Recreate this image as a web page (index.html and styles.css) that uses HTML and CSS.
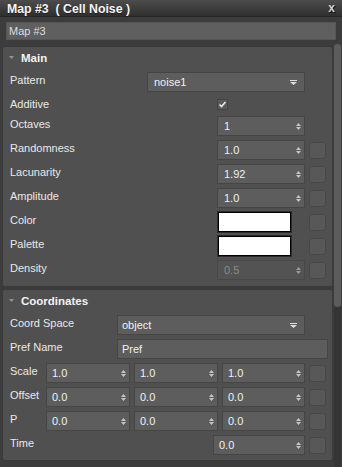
FILE: index.html
```html
<!DOCTYPE html>
<html>
<head>
<meta charset="utf-8">
<link rel="stylesheet" href="styles.css">
</head>
<body>
<div class="window">
  <div class="titlebar">
    <span class="title">Map #3  ( Cell Noise )</span>
    <span class="close">x</span>
  </div>
  <div class="namebar"><div class="namefield">Map #3</div></div>
  <div class="main">
    <div class="content">
      <section class="panel panel-main">
        <div class="panel-head">
          <svg class="tri" width="5" height="3" viewBox="0 0 5 3"><path d="M0 0H5L2.5 3Z"/></svg>
          <span class="panel-title">Main</span>
          <span class="grip"></span>
        </div>
        <div class="row"><span class="label w137">Pattern</span>
          <div class="field drop w158"><span>noise1</span>
            <svg class="darr" width="7" height="5" viewBox="0 0 7 5"><rect width="7" height="1"/><path d="M0 2H7L3.5 5Z"/></svg></div>
        </div>
        <div class="row row-short"><span class="label w207">Additive</span>
          <span class="check"><svg width="9" height="9" viewBox="0 0 9 9"><path d="M1.5 4.5L3.5 6.5L7.5 2" fill="none" stroke="#e8e8e8" stroke-width="1.6"/></svg></span>
        </div>
        <div class="row"><span class="label w207">Octaves</span>
          <div class="field w88"><span>1</span><svg class="spin" width="5" height="9" viewBox="0 0 5 9"><path d="M0 4H5L2.5 1ZM0 5H5L2.5 8Z"/></svg></div>
        </div>
        <div class="row"><span class="label w207">Randomness</span>
          <div class="field w88"><span>1.0</span><svg class="spin" width="5" height="9" viewBox="0 0 5 9"><path d="M0 4H5L2.5 1ZM0 5H5L2.5 8Z"/></svg></div>
          <span class="sq"></span>
        </div>
        <div class="row"><span class="label w207">Lacunarity</span>
          <div class="field w88"><span>1.92</span><svg class="spin" width="5" height="9" viewBox="0 0 5 9"><path d="M0 4H5L2.5 1ZM0 5H5L2.5 8Z"/></svg></div>
          <span class="sq"></span>
        </div>
        <div class="row"><span class="label w207">Amplitude</span>
          <div class="field w88"><span>1.0</span><svg class="spin" width="5" height="9" viewBox="0 0 5 9"><path d="M0 4H5L2.5 1ZM0 5H5L2.5 8Z"/></svg></div>
          <span class="sq"></span>
        </div>
        <div class="row"><span class="label w208">Color</span>
          <span class="swatch"></span>
          <span class="sq sq-sw"></span>
        </div>
        <div class="row"><span class="label w208">Palette</span>
          <span class="swatch"></span>
          <span class="sq sq-sw"></span>
        </div>
        <div class="row"><span class="label w207">Density</span>
          <div class="field w88 disabled"><span>0.5</span><svg class="spin" width="5" height="9" viewBox="0 0 5 9"><path d="M0 4H5L2.5 1ZM0 5H5L2.5 8Z"/></svg></div>
          <span class="sq"></span>
        </div>
      </section>

      <section class="panel panel-coord">
        <div class="panel-head">
          <svg class="tri" width="5" height="3" viewBox="0 0 5 3"><path d="M0 0H5L2.5 3Z"/></svg>
          <span class="panel-title">Coordinates</span>
          <span class="grip"></span>
        </div>
        <div class="row"><span class="label w107">Coord Space</span>
          <div class="field drop w188 pl5"><span>object</span>
            <svg class="darr" width="7" height="5" viewBox="0 0 7 5"><rect width="7" height="1"/><path d="M0 2H7L3.5 5Z"/></svg></div>
        </div>
        <div class="row"><span class="label w107">Pref Name</span>
          <div class="field w211 pl5"><span>Pref</span></div>
        </div>
        <div class="row"><span class="label w36">Scale</span>
          <div class="field w84 pl6"><span>1.0</span><svg class="spin" width="5" height="9" viewBox="0 0 5 9"><path d="M0 4H5L2.5 1ZM0 5H5L2.5 8Z"/></svg></div>
          <div class="field w84 pl6 ml4"><span>1.0</span><svg class="spin" width="5" height="9" viewBox="0 0 5 9"><path d="M0 4H5L2.5 1ZM0 5H5L2.5 8Z"/></svg></div>
          <div class="field w83 pl6 ml4"><span>1.0</span><svg class="spin" width="5" height="9" viewBox="0 0 5 9"><path d="M0 4H5L2.5 1ZM0 5H5L2.5 8Z"/></svg></div>
          <span class="sq"></span>
        </div>
        <div class="row"><span class="label w36">Offset</span>
          <div class="field w84 pl6"><span>0.0</span><svg class="spin" width="5" height="9" viewBox="0 0 5 9"><path d="M0 4H5L2.5 1ZM0 5H5L2.5 8Z"/></svg></div>
          <div class="field w84 pl6 ml4"><span>0.0</span><svg class="spin" width="5" height="9" viewBox="0 0 5 9"><path d="M0 4H5L2.5 1ZM0 5H5L2.5 8Z"/></svg></div>
          <div class="field w83 pl6 ml4"><span>0.0</span><svg class="spin" width="5" height="9" viewBox="0 0 5 9"><path d="M0 4H5L2.5 1ZM0 5H5L2.5 8Z"/></svg></div>
          <span class="sq"></span>
        </div>
        <div class="row"><span class="label w36">P</span>
          <div class="field w84 pl6"><span>0.0</span><svg class="spin" width="5" height="9" viewBox="0 0 5 9"><path d="M0 4H5L2.5 1ZM0 5H5L2.5 8Z"/></svg></div>
          <div class="field w84 pl6 ml4"><span>0.0</span><svg class="spin" width="5" height="9" viewBox="0 0 5 9"><path d="M0 4H5L2.5 1ZM0 5H5L2.5 8Z"/></svg></div>
          <div class="field w83 pl6 ml4"><span>0.0</span><svg class="spin" width="5" height="9" viewBox="0 0 5 9"><path d="M0 4H5L2.5 1ZM0 5H5L2.5 8Z"/></svg></div>
          <span class="sq"></span>
        </div>
        <div class="row"><span class="label w203">Time</span>
          <div class="field w92 pl6"><span>0.0</span><svg class="spin" width="5" height="9" viewBox="0 0 5 9"><path d="M0 4H5L2.5 1ZM0 5H5L2.5 8Z"/></svg></div>
          <span class="sq"></span>
        </div>
      </section>
    </div>
    <div class="scrollbar"><div class="thumb"></div></div>
  </div>
</div>
</body>
</html>
```

FILE: styles.css
```css
* { box-sizing: border-box; }
html, body { margin: 0; padding: 0; }
body {
  width: 342px;
  height: 467px;
  overflow: hidden;
  background: #2e2e2e;
  font-family: "Liberation Sans", Arial, sans-serif;
  font-size: 11px;
  color: #e6e6e6;
}
.window {
  width: 342px;
  height: 467px;
  background: #3c3c3c;
  display: flex;
  flex-direction: column;
}
.titlebar {
  height: 17px;
  flex: none;
  display: flex;
  align-items: flex-start;
  justify-content: space-between;
  background: linear-gradient(#4c4c4c, #2f2f2f);
  border-bottom: 1px solid #262626;
}
.title {
  white-space: pre;
  font-weight: bold;
  font-size: 12.3px;
  line-height: 17px;
  padding-left: 7px;
  padding-top: 1px;
  color: #f4f4f4;
  text-shadow: 0 1px 0 #1e1e1e;
}
.close {
  font-weight: bold;
  font-size: 12px;
  line-height: 17px;
  padding-right: 7px;
  color: #d0d0d0;
  text-shadow: 1px 1px 0 #111;
}
.namebar {
  height: 27px;
  flex: none;
  padding: 5px 6px 0 6px;
}
.namefield {
  height: 18px;
  background: #5f5f5f;
  border: 1px solid #555;
  line-height: 16px;
  padding-left: 2px;
  color: #dcdcdc;
}
.main {
  flex: 1;
  display: flex;
  min-height: 0;
}
.content {
  width: 333px;
  flex: none;
  padding: 2px 0 0 2px;
}
.scrollbar {
  width: 7px;
  margin-left: 1px;
  background: #353535;
  border-radius: 2px;
}
.thumb {
  height: 263px;
  background: #5c5c5c;
  border-radius: 3px;
}
.panel {
  background: #505050;
  border: 1px solid #3a3a3a;
  border-radius: 3px;
  padding-bottom: 6px;
}
.panel-coord {
  margin-top: 2px;
  padding-bottom: 5px;
}
.panel-head {
  height: 25px;
  display: flex;
  align-items: flex-start;
  padding: 3px 0 0 6px;
}
.tri {
  fill: #939393;
  margin-top: 6px;
  margin-right: 7px;
}
.panel-title {
  font-weight: bold;
  font-size: 11.5px;
  line-height: 16px;
  color: #f2f2f2;
}
.grip {
  margin-left: auto;
  margin-right: 8px;
  margin-top: 4px;
  width: 5px;
  height: 5px;
  background-image: radial-gradient(circle, #8a8a8a 0.6px, transparent 0.7px);
  background-size: 2px 2px;
  background-position: 0 0;
}
.row {
  display: flex;
  align-items: center;
  height: 20px;
  padding-left: 7px;
  margin-top: 4px;
}
.panel-head + .row { margin-top: 0; }
.row-short { height: 16px; }
.label {
  align-self: flex-start;
  line-height: 16px;
  flex: none;
  white-space: nowrap;
  color: #e8e8e8;
}
.w36 { width: 36px; }
.w107 { width: 107px; }
.w137 { width: 137px; }
.w203 { width: 203px; }
.w207 { width: 207px; }
.w208 { width: 208px; }
.field {
  height: 20px;
  flex: none;
  display: flex;
  align-items: center;
  justify-content: space-between;
  background: #5d5d5d;
  border: 1px solid #454545;
  padding: 0 3px 0 6px;
  color: #f0f0f0;
  line-height: 16px;
}
.field.pl5 { padding-left: 4px; }
.field.pl6 { padding-left: 5px; }
.drop { padding-right: 7px; }
.w83 { width: 83px; }
.w84 { width: 84px; }
.w88 { width: 88px; }
.w92 { width: 92px; }
.w158 { width: 158px; }
.w188 { width: 188px; }
.w211 { width: 211px; }
.ml4 { margin-left: 4px; }
.darr { fill: #dedede; margin-top: 1px; }
.spin { fill: #c4c4c4; }
.disabled {
  background: #535353;
  border-color: #484848;
  color: #8a8a8a;
}
.disabled .spin { fill: #9a9a9a; }
.check {
  width: 11px;
  height: 11px;
  flex: none;
  background: #5a5a5a;
  border: 1px solid #444;
  display: flex;
  align-items: center;
  justify-content: center;
}
.sq {
  width: 17px;
  height: 17px;
  flex: none;
  margin-left: 4px;
  background: #585858;
  border: 1px solid #474747;
  border-radius: 3px;
}
.swatch {
  width: 73px;
  height: 20px;
  flex: none;
  background: #fff;
  border: 1px solid #000;
  box-shadow: 0 0 0 1px #2c2c2c;
}
.sq-sw { margin-left: 18px; }
```
